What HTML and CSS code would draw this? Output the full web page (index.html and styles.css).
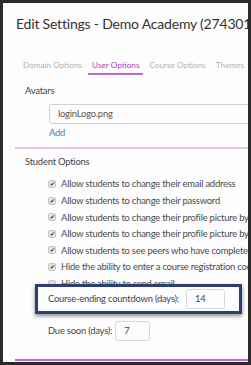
FILE: index.html
```html
<!DOCTYPE html>
<html lang="en">
<head>
    <meta charset="UTF-8">
    <meta name="viewport" content="width=device-width, initial-scale=1.0">
    <title>Edit Settings</title>
    <link rel="stylesheet" href="styles.css">
</head>
<body>

    <!-- 설정 모달 -->
    <div class="modal">
        <h1 class="modal-title">Edit Settings - Demo Academy (2743015)</h1>

        <!-- 탭 -->
        <div class="tabs">
            <span class="tab">Domain Options</span>
            <span class="tab active">User Options</span>
            <span class="tab">Course Options</span>
            <span class="tab">Themes</span>
        </div>

        <!-- 아바타 -->
        <div class="section">
            <div class="section-title">Avatars</div>
            <div class="avatar-input">loginLogo.png</div>
            <a class="add-link">Add</a>
        </div>

        <div class="divider"></div>

        <!-- 학생 옵션 -->
        <div class="section">
            <div class="section-title second">Student Options</div>
            <ul class="options">
                <li><span class="check checked"></span>Allow students to change their email address</li>
                <li><span class="check checked"></span>Allow students to change their password</li>
                <li><span class="check checked"></span>Allow students to change their profile picture by uploading</li>
                <li><span class="check checked"></span>Allow students to change their profile picture by URL</li>
                <li><span class="check checked"></span>Allow students to see peers who have completed</li>
                <li><span class="check checked"></span>Hide the ability to enter a course registration code</li>
                <li><span class="check"></span>Hide the ability to send email</li>
            </ul>

            <div class="field highlight">
                <span>Course-ending countdown (days):</span>
                <span class="num-input wide">14</span>
            </div>
            <div class="field due">
                <span>Due soon (days):</span>
                <span class="num-input">7</span>
            </div>
        </div>

        <div class="divider strong"></div>
    </div>

</body>
</html>
```

FILE: styles.css
```css
/* 전체 */
body {
    margin: 0;
    background-color: #2b2b2b;
    font-family: Lato, "Noto Sans", sans-serif;
    color: #4a4a4a;
}

.modal {
    margin: 3px 3px 0 3px;
    height: 359px;
    background-color: #fdfdfd;
    overflow: hidden;
    white-space: nowrap;
}

.modal-title {
    margin: 0;
    padding: 12px 0 0 13px;
    font-size: 14px;
    letter-spacing: -0.2px;
    font-weight: normal;
    color: #333;
    line-height: 18px;
}

/* 탭 */
.tabs {
    display: flex;
    gap: 10px;
    margin: 26px 0 0 20px;
    font-size: 8.2px;
}

.tab {
    color: #b2b2b2;
    padding-bottom: 2px;
    line-height: 12px;
}

.tab.active {
    color: #b044c4;
    border-bottom: 2px solid #c266d2;
    padding: 0 4px 2px 4px;
    margin: 0 -4px;
}

/* 섹션 */
.section {
    display: flex;
    flex-direction: column;
    align-items: flex-start;
    font-size: 9.4px;
    letter-spacing: -0.2px;
}

.section-title {
    margin: 9px 0 0 22px;
    line-height: 14px;
    color: #444;
}

.section-title.second {
    margin-top: 6px;
}

.avatar-input {
    margin: 6px 0 0 46px;
    width: 220px;
    height: 18px;
    line-height: 18px;
    padding-left: 8px;
    border: 1px solid #d0d0d0;
    border-radius: 3px;
    color: #555;
}

.add-link {
    margin: 2px 0 0 46px;
    color: #3d85c8;
    line-height: 14px;
}

.divider {
    margin: 7px 0 0 12px;
    height: 2px;
    background-color: #e6c2e8;
}

.divider.strong {
    margin-top: 18px;
    background-color: #c46ad2;
}

/* 체크박스 목록 */
.options {
    list-style: none;
    margin: 6.7px 0 0 0;
    padding: 0 0 0 45px;
}

.options li {
    display: flex;
    align-items: center;
    gap: 5px;
    height: 16.6px;
    color: #4a4a4a;
}

.check {
    width: 6px;
    height: 6px;
    border: 1px solid #c8c8c8;
    border-radius: 2px;
    background-color: #e4e4e4;
    font-size: 6px;
    line-height: 6px;
    text-align: center;
    color: #333;
}

.check.checked::after {
    content: "\2714";
}

/* 숫자 입력 */
.field {
    display: flex;
    align-items: center;
    gap: 3px;
    color: #444;
}

.highlight {
    position: relative;
    gap: 7px;
    margin: -8px 0 0 32px;
    padding: 2px 14px 2px 10px;
    background-color: #fdfdfd;
    border: 3px solid #2c3e74;
    box-shadow: 0 2px 4px rgba(0, 0, 0, 0.45);
}

.due {
    margin: 7px 0 0 45px;
}

.num-input {
    width: 25px;
    height: 18px;
    line-height: 18px;
    padding-left: 8px;
    border: 1px solid #d8d8d8;
    border-radius: 3px;
}

.num-input.wide {
    width: 29px;
}
```
